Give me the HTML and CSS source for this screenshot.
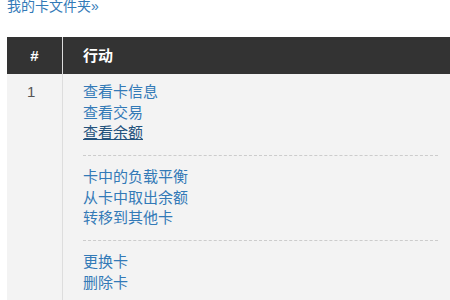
FILE: index.html
```html
<!DOCTYPE html>
<html lang="zh-CN">
<head>
<meta charset="utf-8">
<title>我的卡</title>
<link rel="stylesheet" href="styles.css">
</head>
<body>
<div class="page">
  <a class="crumb" href="#">我的卡文件夹»</a>
  <table class="cards">
    <thead>
      <tr>
        <th class="num">#</th>
        <th class="act">行动</th>
      </tr>
    </thead>
    <tbody>
      <tr>
        <td class="num">1</td>
        <td class="act">
          <div class="group">
            <a href="#">查看卡信息</a>
            <a href="#">查看交易</a>
            <a href="#" class="active">查看余额</a>
          </div>
          <hr class="sep">
          <div class="group">
            <a href="#">卡中的负载平衡</a>
            <a href="#">从卡中取出余额</a>
            <a href="#">转移到其他卡</a>
          </div>
          <hr class="sep">
          <div class="group">
            <a href="#">更换卡</a>
            <a href="#">删除卡</a>
          </div>
        </td>
      </tr>
    </tbody>
  </table>
</div>
</body>
</html>
```

FILE: styles.css
```css
html, body {
  margin: 0;
  padding: 0;
  overflow: hidden;
  background: #ffffff;
}
body {
  font-family: "Liberation Sans", "Noto Sans CJK SC", sans-serif;
  color: #333333;
}
.page {
  padding: 0 0 0 7px;
}
.crumb {
  display: block;
  margin-top: -4px;
  font-size: 14px;
  line-height: 20px;
  color: #337ab7;
  text-decoration: none;
}
.cards {
  margin-top: 21px;
  width: 451px;
  border-collapse: collapse;
  font-size: 15px;
}
.cards th {
  background: #333333;
  color: #ffffff;
  font-weight: bold;
  text-align: left;
  padding: 8px 20px;
  line-height: 21px;
}
.cards th.num {
  border-right: 1px solid #dddddd;
  text-align: center;
}
.cards td {
  background: #f3f3f3;
  vertical-align: top;
  padding: 8px 20px 10px;
  line-height: 20.5px;
}
.cards td.num {
  border-right: 1px solid #dddddd;
  color: #555555;
}
.cards .num {
  width: 15px;
}
.group a {
  display: block;
  color: #337ab7;
  text-decoration: none;
}
.group a.active {
  color: #23527c;
  text-decoration: underline;
}
.sep {
  border: 0;
  border-top: 1px dashed #cccccc;
  height: 0;
  margin: 11px 0 11.5px;
}
```
